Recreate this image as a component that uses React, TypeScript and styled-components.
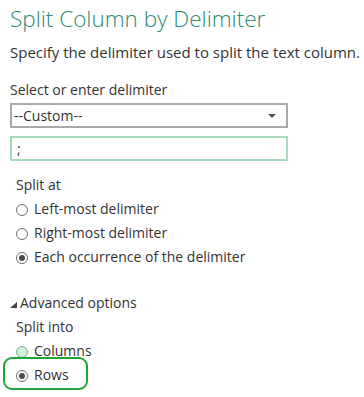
import React from "react";
import styled, { createGlobalStyle } from "styled-components";

const Global = createGlobalStyle`
  html, body { margin: 0; padding: 0; background: #ffffff; }
  body { font-family: "Open Sans", "Noto Sans", sans-serif; color: #333333; }
`;

const Page = styled.div`
  position: relative;
  width: 364px;
  height: 397px;
  padding: 3px 0 0 10px;
  box-sizing: border-box;
  display: flex;
  flex-direction: column;
  overflow: hidden;
`;

const Title = styled.h1`
  margin: 0;
  font-family: "Open Sans", sans-serif;
  font-weight: 300;
  font-size: 22.5px;
  line-height: 32px;
  color: #2b8a72;
  white-space: nowrap;
`;

const Text = styled.div<{ $mt?: number; $size?: number }>`
  margin-top: ${(p) => p.$mt ?? 0}px;
  font-size: ${(p) => p.$size ?? 14}px;
  line-height: 20px;
  color: #333333;
  white-space: nowrap;
`;

const Select = styled.div`
  margin-top: 3px;
  width: 278px;
  height: 25px;
  box-sizing: border-box;
  border: 2px solid #aaaaaa;
  padding: 0 10px 0 2px;
  display: flex;
  align-items: center;
  justify-content: space-between;
  font-size: 14px;
  line-height: 21px;
  color: #333333;
`;

const Arrow = styled.span`
  width: 0;
  height: 0;
  border-left: 4px solid transparent;
  border-right: 4px solid transparent;
  border-top: 4px solid #555555;
`;

const Input = styled.div`
  margin-top: 8px;
  width: 278px;
  height: 25px;
  box-sizing: border-box;
  border: 2px solid #a6dbbb;
  padding: 0 5px;
  font-size: 14px;
  line-height: 21px;
  color: #333333;
`;

const Group = styled.div<{ $mt: number }>`
  margin-top: ${(p) => p.$mt}px;
  margin-left: 6px;
  display: flex;
  flex-direction: column;
`;

const RadioRow = styled.div<{ $first?: boolean }>`
  margin-top: ${(p) => (p.$first ? 2 : 0)}px;
  display: flex;
  align-items: center;
  gap: 6px;
  height: 24px;
  font-size: 14px;
  line-height: 24px;
  color: #333333;
  white-space: nowrap;
`;

const Circle = styled.span<{ $checked?: boolean; $hover?: boolean }>`
  position: relative;
  width: 12px;
  height: 12px;
  box-sizing: border-box;
  border-radius: 50%;
  border: 1px solid ${(p) => (p.$hover ? "#79b58a" : "#6e6e6e")};
  background: ${(p) => (p.$hover ? "#d0eed9" : "#ffffff")};
  flex: none;
  margin-top: 1px;
  &::after {
    content: "";
    display: ${(p) => (p.$checked ? "block" : "none")};
    position: absolute;
    left: 2px;
    top: 2px;
    width: 6px;
    height: 6px;
    border-radius: 50%;
    background: #4a4a4a;
  }
`;

const Expander = styled.div`
  margin-top: 24px;
  display: flex;
  align-items: center;
  gap: 3px;
  font-size: 14px;
  line-height: 20px;
  color: #333333;
  white-space: nowrap;
`;

const Tri = styled.span`
  width: 0;
  height: 0;
  border-left: 7px solid transparent;
  border-bottom: 6px solid #444444;
  margin-top: 3px;
`;

const Highlight = styled.div`
  position: absolute;
  left: 3px;
  top: 357px;
  width: 85px;
  height: 33px;
  box-sizing: border-box;
  border: 2px solid #1fa53a;
  border-radius: 9px;
`;

export default function App() {
  return (
    <>
      <Global />
      <Page>
        <Title>Split Column by Delimiter</Title>
        <Text $mt={7} $size={15}>
          Specify the delimiter used to split the text column.
        </Text>
        <Text $mt={18}>Select or enter delimiter</Text>
        <Select>
          <span>--Custom--</span>
          <Arrow />
        </Select>
        <Input>;</Input>
        <Group $mt={14}>
          <Text>Split at</Text>
          <RadioRow $first>
            <Circle />
            Left-most delimiter
          </RadioRow>
          <RadioRow>
            <Circle />
            Right-most delimiter
          </RadioRow>
          <RadioRow>
            <Circle $checked />
            Each occurrence of the delimiter
          </RadioRow>
        </Group>
        <Expander>
          <Tri />
          Advanced options
        </Expander>
        <Group $mt={4}>
          <Text>Split into</Text>
          <RadioRow $first>
            <Circle $hover />
            Columns
          </RadioRow>
          <RadioRow>
            <Circle $checked />
            Rows
          </RadioRow>
        </Group>
        <Highlight />
      </Page>
    </>
  );
}
